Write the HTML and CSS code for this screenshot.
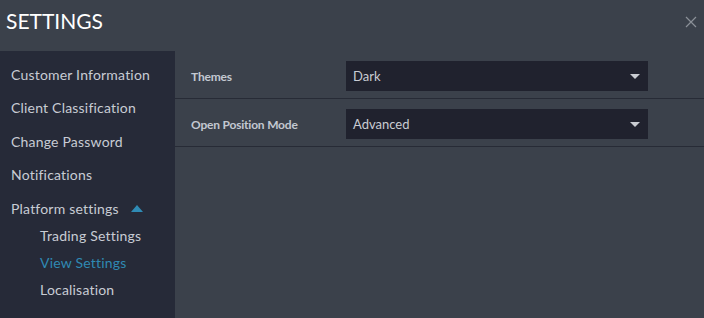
FILE: index.html
```html
<!DOCTYPE html>
<html lang="en">
<head>
  <meta charset="UTF-8">
  <meta name="viewport" content="width=device-width, initial-scale=1.0">
  <title>Settings</title>
  <link rel="stylesheet" href="styles.css">
</head>
<body>
  <div class="settings">
    <!-- Title bar -->
    <div class="head">
      <h2>SETTINGS</h2>
      <svg class="close" width="12" height="12" viewBox="0 0 12 12">
        <path d="M1 1 L11 11 M11 1 L1 11" stroke="#8b9098" stroke-width="1.2" fill="none"/>
      </svg>
    </div>

    <div class="body">
      <!-- Left menu -->
      <ul class="menu">
        <li>Customer Information</li>
        <li>Client Classification</li>
        <li>Change Password</li>
        <li>Notifications</li>
        <li class="open">Platform settings <span class="caret-up"></span></li>
        <li class="sub">
          <ul>
            <li>Trading Settings</li>
            <li class="active">View Settings</li>
            <li>Localisation</li>
          </ul>
        </li>
      </ul>

      <!-- View settings -->
      <div class="panel">
        <div class="row">
          <label>Themes</label>
          <div class="dropdown">Dark <span class="caret-down"></span></div>
        </div>
        <div class="row">
          <label>Open Position Mode</label>
          <div class="dropdown">Advanced <span class="caret-down"></span></div>
        </div>
      </div>
    </div>
  </div>
</body>
</html>
```

FILE: styles.css
```css
body {
  margin: 0;
  font-family: Lato, "Open Sans", sans-serif;
  background-color: #3b414b;
  color: #c8ccd4;
}

.settings {
  height: 318px;
  display: flex;
  flex-direction: column;
}

.head {
  height: 51px;
  box-sizing: border-box;
  padding: 8px 7px 0 6px;
  display: flex;
  justify-content: space-between;
  align-items: flex-start;
}

.head h2 {
  margin: 0;
  font-size: 21px;
  line-height: 25px;
  font-weight: 400;
  color: #ffffff;
}

.close {
  margin-top: 8px;
}

.body {
  flex: 1;
  display: flex;
}

/* Menu */
.menu {
  width: 175px;
  margin: 0;
  padding: 6.5px 0 0 0;
  list-style: none;
  background-color: #262a38;
  font-size: 14px;
  letter-spacing: 0.2px;
}

.menu li {
  padding-left: 11px;
  line-height: 33.5px;
}

.menu .sub {
  padding-left: 0;
}

.menu .sub ul {
  margin: -3px 0 0 0;
  padding: 0;
  list-style: none;
}

.menu .sub li {
  padding-left: 40px;
  line-height: 27px;
}

.menu .active {
  color: #2f89b3;
}

.caret-up {
  display: inline-block;
  width: 0;
  height: 0;
  margin-left: 8px;
  border-left: 6.5px solid transparent;
  border-right: 6.5px solid transparent;
  border-bottom: 7px solid #2f8bb5;
  vertical-align: 2px;
}

/* Panel */
.panel {
  flex: 1;
}

.row {
  display: flex;
  align-items: center;
  height: 48px;
  padding: 3px 0 0 16px;
  box-sizing: border-box;
  border-bottom: 1px solid #272b36;
}

.row label {
  width: 155px;
  font-size: 12px;
  font-weight: 700;
  letter-spacing: -0.2px;
  color: #c3c8d1;
}

.dropdown {
  width: 302px;
  height: 30px;
  box-sizing: border-box;
  padding: 0 7px;
  display: flex;
  justify-content: space-between;
  align-items: center;
  background-color: #20222e;
  font-size: 13px;
  color: #c9ccd3;
}

.caret-down {
  width: 0;
  height: 0;
  margin-right: 1px;
  border-left: 5.5px solid transparent;
  border-right: 5.5px solid transparent;
  border-top: 5px solid #c9ccd2;
}
```
